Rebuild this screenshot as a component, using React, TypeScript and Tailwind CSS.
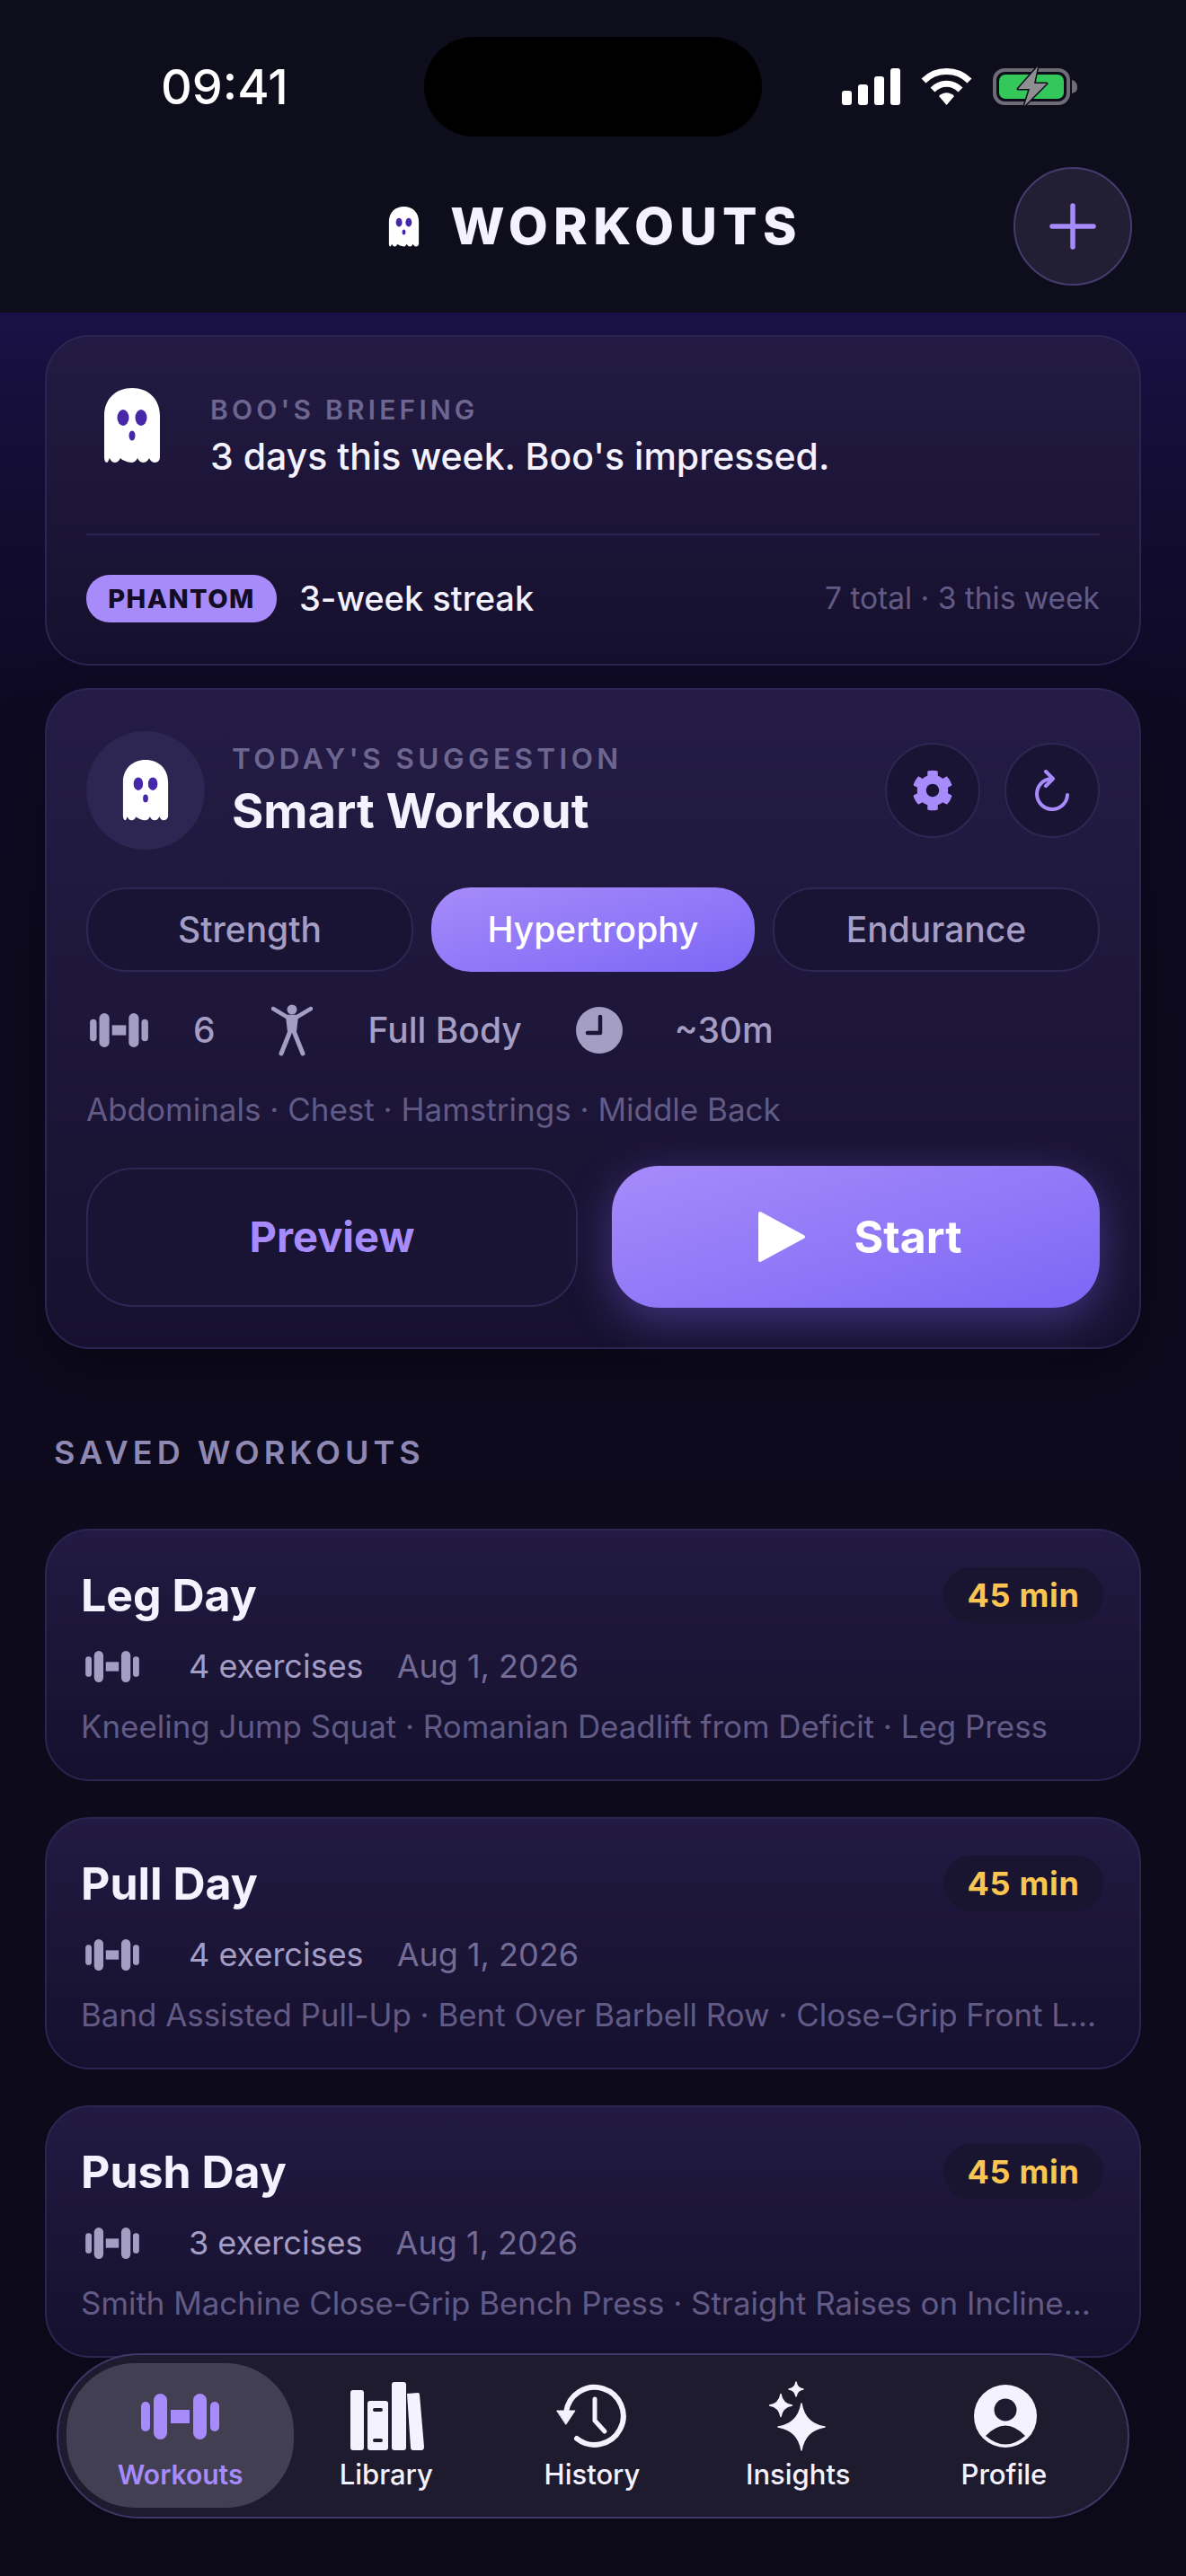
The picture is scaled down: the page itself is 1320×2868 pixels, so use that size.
import React from "react";
import { FaCog } from "react-icons/fa";

const Ghost = ({ className }: { className: string }) => (
  <svg viewBox="0 0 62 84" className={className}>
    <path
      d="M0 31C0 12 13 0 31 0s31 12 31 31v46c0 3-2 6-6 6-3 0-5-3-6-5-1 2-3 5-6.500 5s-5.500-3-6.500-5c-1 2-3 5-6.500 5S19 80 18 78c-1 2-3 5-6 5-3.500 0-5-3-6-5-1 2-2 5-3 5-2 0-3-3-3-6Z"
      fill="#fff"
    />
    <ellipse cx="21" cy="33" rx="6.500" ry="9" fill="#4527a8" />
    <ellipse cx="41" cy="33" rx="6.500" ry="9" fill="#4527a8" />
    <ellipse cx="31" cy="53" rx="3.500" ry="5.500" fill="#4527a8" />
  </svg>
);

const Dumbbell = ({ className }: { className: string }) => (
  <svg viewBox="0 0 87 51" className={className} fill="currentColor">
    <rect x="0" y="9" width="10" height="33" rx="5" />
    <rect x="14" y="0" width="15" height="51" rx="7.500" />
    <rect x="33" y="18" width="21" height="15" />
    <rect x="58" y="0" width="15" height="51" rx="7.500" />
    <rect x="77" y="9" width="10" height="33" rx="5" />
  </svg>
);

const Figure = () => (
  <svg viewBox="0 0 46 58" className="w-[46px] h-[58px] text-[#a49dc4]" fill="none" stroke="currentColor" strokeLinecap="round" strokeLinejoin="round">
    <circle cx="23" cy="6" r="5.500" fill="currentColor" stroke="none" />
    <path d="M2 5 L17 14 H29 L44 5" strokeWidth="4.500" />
    <path d="M17 14 H29 L27 31 H19 Z" fill="currentColor" strokeWidth="2" />
    <path d="M21 30 L11 55 M25 30 L35 55" strokeWidth="5" />
  </svg>
);

const Clock = () => (
  <svg viewBox="0 0 52 52" className="w-[52px] h-[52px]">
    <circle cx="26" cy="26" r="26" fill="#a49dc4" />
    <path d="M27 11 V29 H13" fill="none" stroke="#1b1538" strokeWidth="4.500" strokeLinecap="round" strokeLinejoin="round" />
  </svg>
);

const Refresh = () => (
  <svg viewBox="0 0 40 46" className="w-[40px] h-[46px] text-[#a78bfa]" fill="none" stroke="currentColor" strokeWidth="4" strokeLinecap="round" strokeLinejoin="round">
    <path d="M19 10 A17 17 0 1 0 37 28" />
    <path d="M13 2 L21 10 L13 18" />
  </svg>
);

const Signal = () => (
  <svg viewBox="0 0 65 41" className="w-[65px] h-[41px]" fill="#fff">
    <rect x="0" y="25" width="11" height="16" rx="3" />
    <rect x="18" y="18" width="11" height="23" rx="3" />
    <rect x="36" y="9" width="11" height="32" rx="3" />
    <rect x="54" y="0" width="11" height="41" rx="3" />
  </svg>
);

const Wifi = () => (
  <svg viewBox="0 0 57 42" className="w-[57px] h-[42px]" fill="none" stroke="#fff" strokeWidth="7">
    <path d="M3 15 C17 1 40 1 54 15" />
    <path d="M13 25 C22 16 35 16 44 25" />
    <path d="M20 32 C25 27 32 27 37 32 L28.500 42 Z" fill="#fff" stroke="none" />
  </svg>
);

const Battery = () => (
  <svg viewBox="0 0 94 46" className="w-[94px] h-[46px]">
    <rect x="2" y="5" width="82" height="37" rx="11" fill="none" stroke="#6e6d75" strokeWidth="4" />
    <rect x="7" y="10" width="72" height="27" rx="7" fill="#34c759" />
    <path d="M88 16 C92 17 94 20 94 24 C94 28 92 30 88 31 Z" fill="#6e6d75" />
    <path d="M50 1 L28 26 H41 L35 45 L60 20 H46 Z" fill="#8e8e93" stroke="#0e0d1c" strokeWidth="3" strokeLinejoin="round" paintOrder="stroke" />
  </svg>
);

const Library = () => (
  <svg viewBox="0 0 83 76" className="ml-[4px] w-[83px] h-[76px]" fill="#f5f2ff">
    <rect x="0" y="9" width="15" height="67" rx="3" />
    <path d="M19 24a3 3 0 0 1 3-3h17a3 3 0 0 1 3 3v49a3 3 0 0 1-3 3H22a3 3 0 0 1-3-3Z" />
    <rect x="25" y="29" width="11" height="4" rx="2" fill="#1f1b2e" />
    <rect x="25" y="63" width="11" height="4" rx="2" fill="#1f1b2e" />
    <rect x="46" y="0" width="16" height="76" rx="3" />
    <path d="M63 13 L75 12 Q77 12 77 14 L82 72 Q82 76 79 76 L70 76 Q67 76 67 73 Z" />
  </svg>
);

const History = () => (
  <svg viewBox="0 0 80 74" className="w-[80px] h-[74px]" fill="none" stroke="#f5f2ff" strokeLinecap="round" strokeLinejoin="round">
    <path d="M11 33 A32 32 0 1 1 23 62" strokeWidth="6" />
    <path d="M1 31 H21 L11 46 Z" fill="#f5f2ff" strokeWidth="1" />
    <path d="M43 18 V42 L54 54" strokeWidth="5" />
  </svg>
);

const star = (x: number, y: number, r: number) => {
  const c = r * 0.14;
  return `M${x} ${y - r}Q${x + c} ${y - c} ${x + r} ${y}Q${x + c} ${y + c} ${x} ${y + r}Q${x - c} ${y + c} ${x - r} ${y}Q${x - c} ${y - c} ${x} ${y - r}Z`;
};

const Sparkles = () => (
  <svg viewBox="0 0 64 78" className="w-[64px] h-[78px]" fill="#f5f2ff" stroke="#f5f2ff" strokeWidth="1.500" strokeLinejoin="round">
    <path d={star(36, 51, 26)} />
    <path d={star(13, 27, 12.500)} />
    <path d={star(30, 9, 8)} />
  </svg>
);

const Profile = () => (
  <svg viewBox="0 0 70 70" className="ml-[4px] w-[70px] h-[70px]">
    <circle cx="35" cy="35" r="35" fill="#f5f2ff" />
    <circle cx="35" cy="28" r="12.500" fill="#1f1b2e" />
    <path d="M13 57 Q35 34 57 57 Q35 76 13 57 Z" fill="#1f1b2e" />
  </svg>
);

const workouts = [
  { name: "Leg Day", count: "4 exercises", list: "Kneeling Jump Squat · Romanian Deadlift from Deficit · Leg Press" },
  { name: "Pull Day", count: "4 exercises", list: "Band Assisted Pull-Up · Bent Over Barbell Row · Close-Grip Front L..." },
  { name: "Push Day", count: "3 exercises", list: "Smith Machine Close-Grip Bench Press · Straight Raises on Incline..." },
];

const WorkoutCard = ({ name, count, list }: { name: string; count: string; list: string }) => (
  <div className="h-[281px] rounded-[50px] border-2 border-[#2c2552] bg-gradient-to-b from-[#221a42] to-[#15102d] pl-[38px] pr-[40px] pt-[41px]">
    <div className="flex items-center justify-between h-[62px]">
      <h3 className="text-[50px] leading-[60px] font-bold text-[#f5f2ff]">{name}</h3>
      <span className="h-[62px] w-[178px] rounded-full bg-[#191430] flex items-center justify-center text-[36px] font-bold tracking-[0.02em] text-[#fbc552]">45 min</span>
    </div>
    <div className="mt-[26px] flex items-center h-[44px] text-[36px] leading-[44px]">
      <span className="ml-[5px] w-[115px] text-[#a49dc4]"><Dumbbell className="w-[60px] h-[35px]" /></span>
      <span className="text-[#a49dc4]">{count}</span>
      <span className="ml-[37px] text-[#736c96]">Aug 1, 2026</span>
    </div>
    <p className="mt-[23px] text-[34.900px] leading-[44px] text-[#625b85] whitespace-nowrap">{list}</p>
  </div>
);

const Pill = ({ label, active }: { label: string; active?: boolean }) => (
  <div
    className={
      active
        ? "flex-1 h-[94px] rounded-[44px] bg-gradient-to-br from-[#a78bfa] to-[#7c66f5] flex items-center justify-center text-[39px] font-medium text-white"
        : "flex-1 h-[94px] rounded-[44px] border-2 border-[#2e2753] bg-[#1a1434] flex items-center justify-center text-[39px] font-medium text-[#a49dc4]"
    }
  >
    {label}
  </div>
);

const NavItem = ({ label, active, children }: { label: string; active?: boolean; children: React.ReactNode }) => (
  <div
    className={
      active
        ? "-mx-[12px] h-[161px] rounded-[76px] bg-[#423f52] flex flex-col items-center justify-center text-[#a78bfa]"
        : "h-[161px] flex flex-col items-center justify-center text-[#f5f2ff]"
    }
  >
    <div className="h-[80px] flex items-center justify-center">{children}</div>
    <span className={active ? "mt-[7px] text-[30px] leading-[36px] font-semibold" : "mt-[7px] text-[31px] leading-[36px] font-medium"}>{label}</span>
  </div>
);

export default function App() {
  return (
    <div className="relative w-[1320px] h-[2868px] overflow-hidden bg-[#0c0a19] font-['Inter',sans-serif]">
      <header className="h-[348px] bg-[#0e0d1c] px-[60px]">
        <div className="h-[186px] flex items-start">
          <div className="w-[380px] pt-[67px] pl-[119px] text-[54px] leading-[60px] font-medium text-white">09:41</div>
          <div className="mt-[41px] ml-[32px] w-[376px] h-[111px] rounded-[56px] bg-black" />
          <div className="pt-[73px] ml-[89px] flex items-start gap-[23px]">
            <div className="mt-[3px]"><Signal /></div>
            <div className="mt-[2px]"><Wifi /></div>
            <Battery />
          </div>
        </div>
        <div className="relative flex items-center justify-center h-[132px]">
          <div className="ml-[5px] flex items-center gap-[34px]">
            <Ghost className="w-[35px] h-[45px]" />
            <h1 className="text-[57px] leading-[60px] font-extrabold tracking-[0.11em] text-[#f5f2ff]">WORKOUTS</h1>
          </div>
          <button className="absolute right-0 top-0 w-[132px] h-[132px] rounded-full bg-[#221e33] border-2 border-[#443c6e] flex items-center justify-center">
            <svg viewBox="0 0 52 52" className="w-[52px] h-[52px]" stroke="#a78bfa" strokeWidth="5.500" strokeLinecap="round">
              <path d="M26 3V49M3 26H49" />
            </svg>
          </button>
        </div>
      </header>

      <main className="h-[2520px] px-[50px] pt-[25px] bg-[linear-gradient(180deg,#1a1247_0%,#171040_2%,#130d33_8%,#0e0a24_17%,#0d0a1e_30%,#0c0a19_100%)]">
        <section className="rounded-[50px] border-2 border-[#2c2552] bg-gradient-to-b from-[#231b43] to-[#16102e] px-[44px] pt-[57px] pb-[44px]">
          <div className="flex items-start pl-[20px] gap-[56px]">
            <Ghost className="w-[62px] h-[84px]" />
            <div className="pt-[6px]">
              <p className="text-[30px] leading-[36px] font-semibold tracking-[0.14em] text-[#6d6690]">BOO'S BRIEFING</p>
              <p className="mt-[10px] text-[41px] leading-[48px] font-medium text-[#f5f2ff]">3 days this week. Boo's impressed.</p>
            </div>
          </div>
          <div className="mt-[62px] h-[2px] bg-[#2c2552]" />
          <div className="mt-[42px] flex items-center">
            <span className="h-[53px] w-[212px] rounded-[26px] bg-[#a78bfa] flex items-center justify-center text-[29px] font-extrabold tracking-[0.05em] text-[#120d24]">PHANTOM</span>
            <span className="ml-[25px] text-[38px] font-medium text-[#f5f2ff]">3-week streak</span>
            <span className="ml-auto text-[33.500px] text-[#625b85]">7 total · 3 this week</span>
          </div>
        </section>

        <section className="mt-[25px] rounded-[50px] border-2 border-[#2c2552] bg-gradient-to-b from-[#241c45] to-[#17112f] shadow-[0_20px_60px_rgba(0,0,0,0.3)] px-[44px] pt-[46px] pb-[44px]">
          <div className="flex items-center">
            <div className="w-[132px] h-[132px] rounded-full bg-[#2d2552] flex items-center justify-center">
              <Ghost className="w-[52px] h-[68px]" />
            </div>
            <div className="ml-[30px]">
              <p className="text-[31.500px] leading-[40px] font-semibold tracking-[0.14em] text-[#6d6690]">TODAY'S SUGGESTION</p>
              <h2 className="mt-[6px] text-[54px] leading-[64px] font-bold text-[#f5f2ff]">Smart Workout</h2>
            </div>
            <div className="ml-auto flex gap-[27px]">
              <div className="w-[106px] h-[106px] rounded-full border-2 border-[#2e2753] bg-[#1a1434] flex items-center justify-center text-[#a78bfa]">
                <FaCog className="text-[46px]" />
              </div>
              <div className="w-[106px] h-[106px] rounded-full border-2 border-[#2e2753] bg-[#1a1434] flex items-center justify-center">
                <Refresh />
              </div>
            </div>
          </div>

          <div className="mt-[42px] flex gap-[20px]">
            <Pill label="Strength" />
            <Pill label="Hypertrophy" active />
            <Pill label="Endurance" />
          </div>

          <div className="mt-[36px] h-[58px] flex items-center text-[39px] font-medium text-[#a49dc4]">
            <span className="ml-[4px]"><Dumbbell className="w-[65px] h-[38px]" /></span>
            <span className="ml-[50px]">6</span>
            <span className="ml-[62px]"><Figure /></span>
            <span className="ml-[62px]">Full Body</span>
            <span className="ml-[60px]"><Clock /></span>
            <span className="ml-[58px]">~30m</span>
          </div>

          <p className="mt-[37px] text-[35px] leading-[44px] text-[#625b85]">Abdominals · Chest · Hamstrings · Middle Back</p>

          <div className="mt-[41px] flex items-center gap-[38px]">
            <button className="flex-1 h-[155px] rounded-[52px] border-2 border-[#2e2753] bg-[#1a1434] text-[47px] font-bold text-[#a78bfa]">Preview</button>
            <button className="flex-1 h-[158px] rounded-[52px] bg-gradient-to-br from-[#a78bfa] to-[#7c66f5] shadow-[0_14px_50px_rgba(124,102,245,0.4)] flex items-center justify-center gap-[54px] text-[50px] font-bold text-white">
              <svg viewBox="0 0 54 58" className="ml-[8px] w-[54px] h-[58px]" fill="#fff" stroke="#fff" strokeWidth="4" strokeLinejoin="round">
                <path d="M3 3 L51 29 L3 55 Z" />
              </svg>
              Start
            </button>
          </div>
        </section>

        <h4 className="mt-[95px] pl-[10px] text-[36px] leading-[40px] font-semibold tracking-[0.14em] text-[#8f88b2]">SAVED WORKOUTS</h4>

        <div className="mt-[65px] flex flex-col gap-[40px]">
          {workouts.map((w) => (
            <WorkoutCard key={w.name} {...w} />
          ))}
        </div>
      </main>

      <nav className="absolute left-[63px] top-[2620px] w-[1194px] h-[184px] rounded-[92px] border-2 border-[#3f3868] bg-[#1f1b2e] pl-[21px] pr-[23px] pt-[9px] grid grid-cols-5">
        <NavItem label="Workouts" active>
          <Dumbbell className="w-[87px] h-[51px]" />
        </NavItem>
        <NavItem label="Library"><Library /></NavItem>
        <NavItem label="History"><History /></NavItem>
        <NavItem label="Insights"><Sparkles /></NavItem>
        <NavItem label="Profile"><Profile /></NavItem>
      </nav>
    </div>
  );
}
